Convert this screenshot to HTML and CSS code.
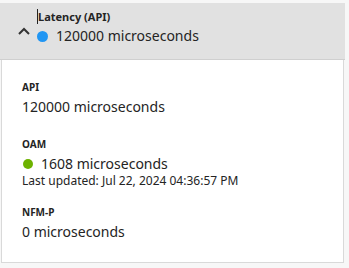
FILE: index.html
```html
<!DOCTYPE html>
<html>
<head>
<meta charset="utf-8">
<link rel="stylesheet" href="styles.css">
</head>
<body>
<div class="panel">
  <div class="header">
    <div class="toggle">
      <svg class="chevron" width="12" height="8" viewBox="0 0 12 8"><polyline points="1,7 6,2 11,7" fill="none" stroke="#333" stroke-width="2"/></svg>
    </div>
    <div class="head-main">
      <div class="title"><span class="caret"></span>Latency (API)</div>
      <div class="status"><span class="dot dot-blue"></span>120000 microseconds</div>
    </div>
  </div>
  <div class="body">
    <div class="group">
      <div class="label">API</div>
      <div class="value">120000 microseconds</div>
    </div>
    <div class="group">
      <div class="label">OAM</div>
      <div class="value"><span class="dot dot-green"></span>1608 microseconds</div>
      <div class="updated">Last updated: Jul 22, 2024 04:36:57 PM</div>
    </div>
    <div class="group">
      <div class="label">NFM-P</div>
      <div class="value">0 microseconds</div>
    </div>
  </div>
</div>
</body>
</html>
```

FILE: styles.css
```css
html, body {
  margin: 0;
  padding: 0;
  background: #f7f7f7;
  font-family: "Noto Sans", "Open Sans", sans-serif;
  color: #242424;
}
.panel {
  width: 345px;
  padding-top: 3px;
}
.header {
  display: flex;
  height: 56px;
  background: #e1e1e1;
  border-bottom: 1px solid #cfcfcf;
}
.toggle {
  width: 37px;
  padding: 24px 0 0 18px;
  box-sizing: border-box;
}
.chevron {
  display: block;
}
.head-main {
  padding-top: 6px;
}
.title {
  font-size: 11px;
  font-weight: 700;
  line-height: 15px;
  display: flex;
  align-items: center;
}
.caret {
  width: 1px;
  height: 15px;
  background: #222;
}
.status {
  display: flex;
  align-items: center;
  font-size: 14px;
  line-height: 22px;
  margin-top: 1px;
}
.dot {
  display: inline-block;
  border-radius: 50%;
  flex: none;
}
.dot-blue {
  width: 11px;
  height: 11px;
  background: #2196f3;
  margin: 0 8px 0 0;
}
.dot-green {
  width: 10px;
  height: 10px;
  background: #6db200;
  margin: 0 8px 0 1px;
}
.body {
  margin: 0 1px;
  background: #fff;
  border: 1px solid #d9d9d9;
  border-top: none;
  padding: 20px 20px 20px;
  display: flex;
  flex-direction: column;
  gap: 20px;
}
.label {
  font-size: 10px;
  font-weight: 700;
  line-height: 14px;
}
.value {
  display: flex;
  align-items: center;
  font-size: 14px;
  line-height: 20px;
  margin-top: 3px;
}
.updated {
  font-size: 12px;
  line-height: 14px;
  margin-bottom: -3px;
}
```
